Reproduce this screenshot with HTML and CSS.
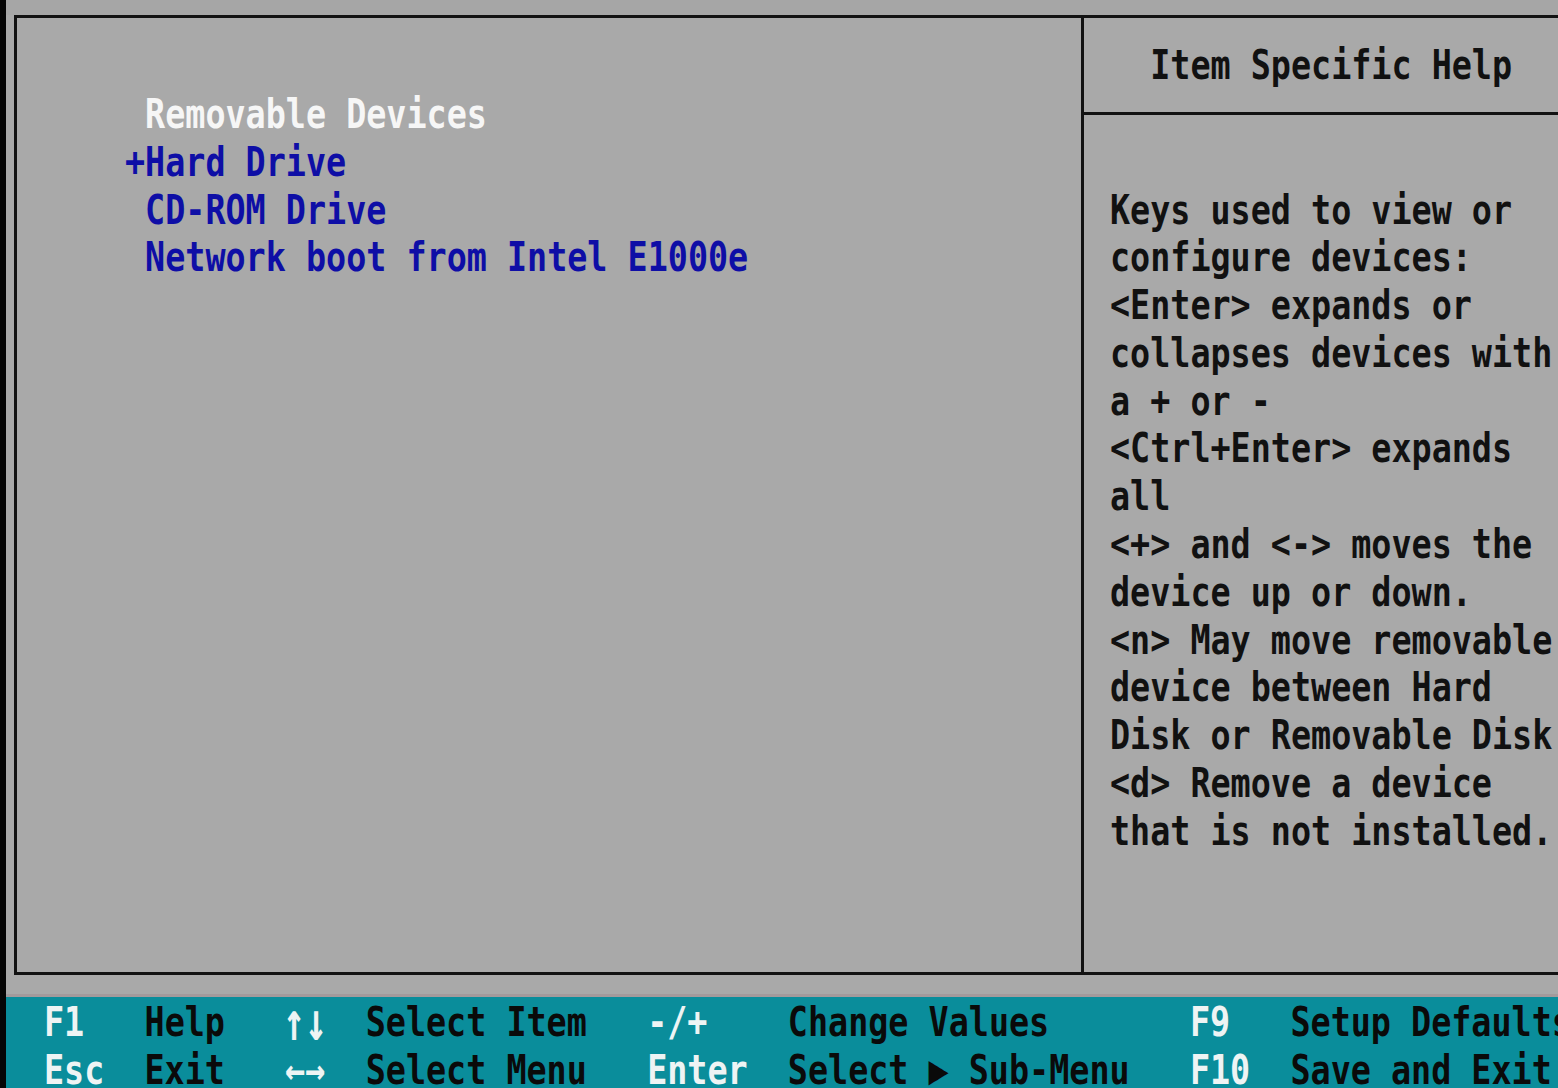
FILE: index.html
```html
<!DOCTYPE html>
<html lang="en">
<head>
<meta charset="utf-8">
<title>Boot</title>
<link rel="stylesheet" href="styles.css">
</head>
<body>
<div class="screen">
  <div class="top-strip"></div>
  <div class="frame">
    <div class="menu-panel">
      <div class="row white"> Removable Devices</div>
      <div class="row blue">+Hard Drive</div>
      <div class="row blue"> CD-ROM Drive</div>
      <div class="row blue"> Network boot from Intel E1000e</div>
    </div>
    <div class="help-panel">
      <div class="help-title"><div class="row">  Item Specific Help</div></div>
      <div class="help-body">
        <div class="row">Keys used to view or</div>
        <div class="row">configure devices:</div>
        <div class="row">&lt;Enter&gt; expands or</div>
        <div class="row">collapses devices with</div>
        <div class="row">a + or -</div>
        <div class="row">&lt;Ctrl+Enter&gt; expands</div>
        <div class="row">all</div>
        <div class="row">&lt;+&gt; and &lt;-&gt; moves the</div>
        <div class="row">device up or down.</div>
        <div class="row">&lt;n&gt; May move removable</div>
        <div class="row">device between Hard</div>
        <div class="row">Disk or Removable Disk</div>
        <div class="row">&lt;d&gt; Remove a device</div>
        <div class="row">that is not installed.</div>
      </div>
    </div>
  </div>
  <div class="gap"></div>
  <div class="footer">
    <div class="row"><span class="key">F1</span>   Help   <span class="key tall">↑↓</span>  Select Item   <span class="key">-/+</span>    Change Values       <span class="key">F9</span>   Setup Defaults</div>
    <div class="row"><span class="key">Esc</span>  Exit   <span class="key">←→</span>  Select Menu   <span class="key">Enter</span>  Select ▶ Sub-Menu   <span class="key">F10</span>  Save and Exit</div>
  </div>
</div>
</body>
</html>
```
FILE: styles.css
```css
html, body {
  margin: 0;
  padding: 0;
}
body {
  background: #a9a9a9;
  overflow: hidden;
}
.screen {
  width: 1558px;
  height: 1088px;
  box-sizing: border-box;
  border-left: 6px solid #050505;
  background: #a9a9a9;
  display: flex;
  flex-direction: column;
  overflow: hidden;
  font-family: "DejaVu Sans Mono", monospace;
  font-weight: bold;
  font-size: 33.4px;
  color: #111;
}
.row {
  height: 47.8px;
  line-height: 47.8px;
  white-space: pre;
  transform: scaleY(1.23);
}
.top-strip {
  height: 15px;
  flex: 0 0 15px;
  background: #a6a6a6;
}
.frame {
  flex: 0 0 960px;
  box-sizing: border-box;
  margin-left: 8px;
  border-top: 3px solid #121212;
  border-left: 3px solid #121212;
  border-bottom: 3px solid #121212;
  display: flex;
}
.menu-panel {
  flex: 0 0 1064px;
  box-sizing: border-box;
  padding: 72px 0 0 108px;
}
.white { color: #f6f6f6; }
.blue { color: #0e0ea6; }
.help-panel {
  flex: 1 0 auto;
  border-left: 3px solid #121212;
  display: flex;
  flex-direction: column;
}
.help-title {
  height: 94px;
  border-bottom: 3px solid #121212;
  padding-left: 26px;
  display: flex;
  align-items: center;
}
.help-body {
  padding: 70.5px 0 0 26px;
}
.gap {
  flex: 0 0 22px;
  box-sizing: border-box;
  border-bottom: 3px solid #a39a9c;
}
.footer {
  flex: 1 1 auto;
  background: #0a8d9b;
  padding: 1px 0 0 38px;
  color: #0a0a0a;
}
.key {
  color: #eef4f4;
}
.tall {
  display: inline-block;
  line-height: 1;
  transform: scale(1.1, 1.3);
}
```
